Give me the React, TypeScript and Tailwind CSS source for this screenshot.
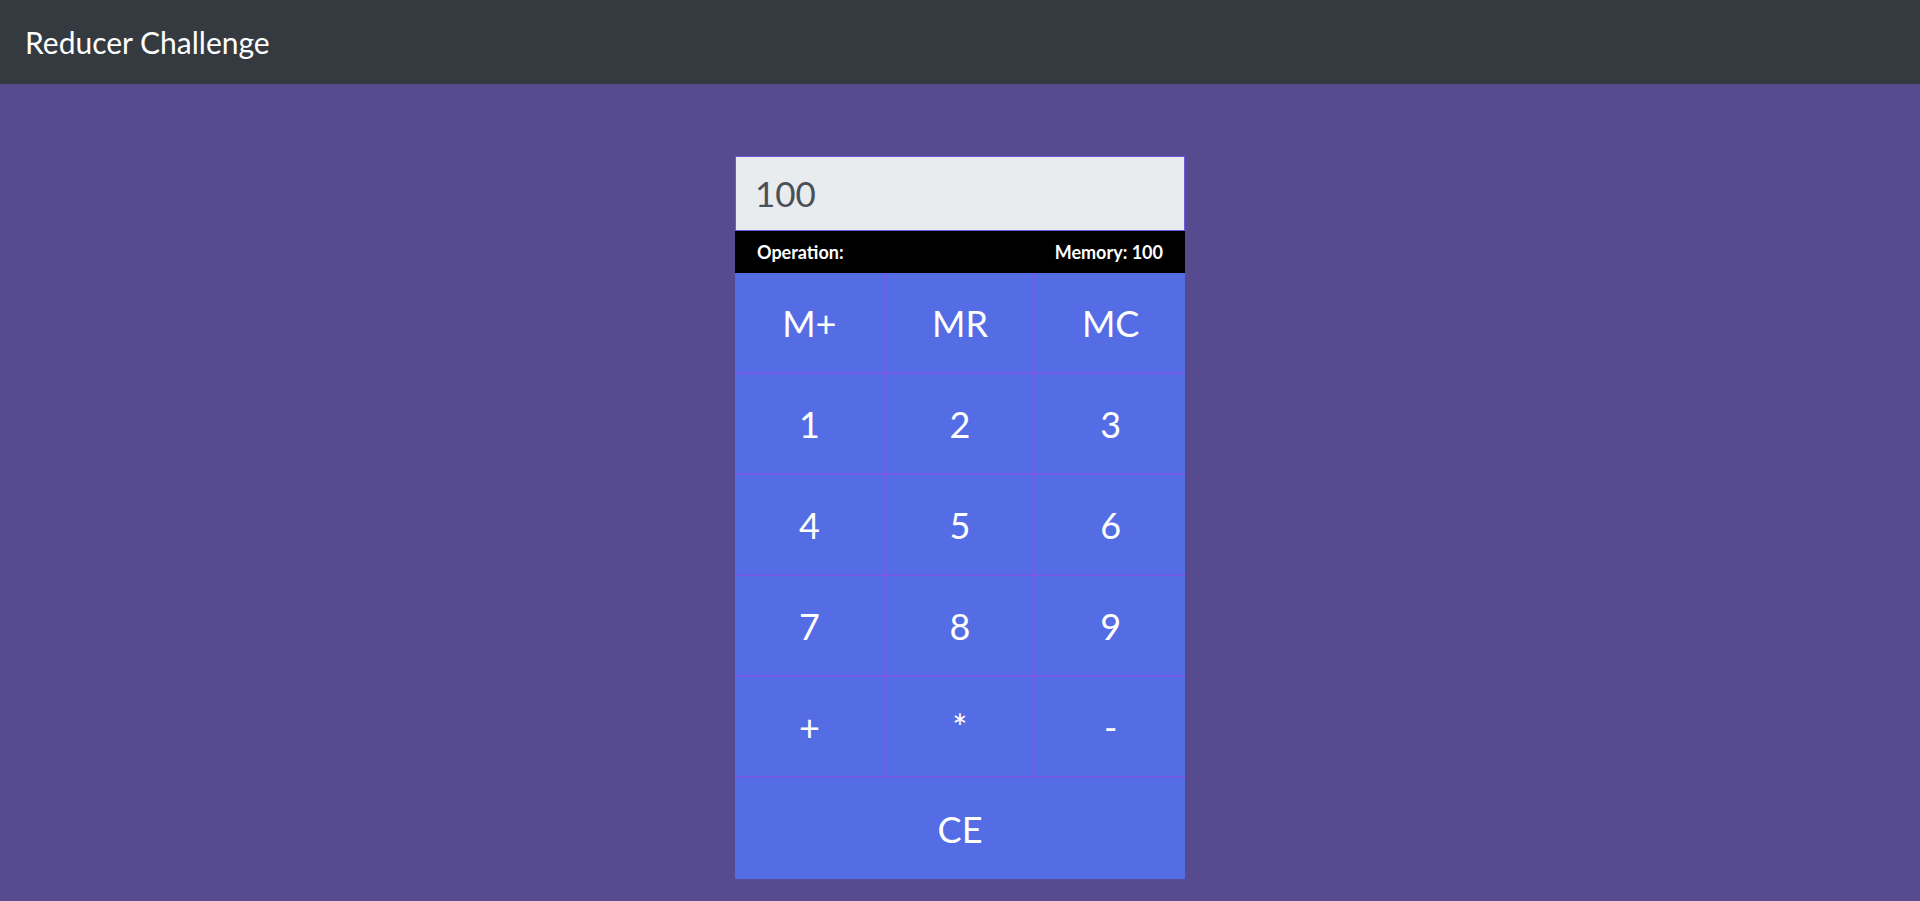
const keys = ["M+", "MR", "MC", "1", "2", "3", "4", "5", "6", "7", "8", "9", "+", "*", "-"];

export default function App() {
  return (
    <div className="min-h-[901px] bg-[#574b90] font-['Lato','Liberation_Sans',sans-serif]">
      <nav className="flex h-[84px] items-center bg-[#343a40] px-[25px]">
        <span className="text-[30px] leading-none text-white">Reducer Challenge</span>
      </nav>
      <div className="mx-auto mt-[72px] w-[450px]">
        <div className="flex h-[75px] items-center border border-[#7158e2] bg-[#e9ecef] pl-[19px] text-[35px] text-[#495057]">
          100
        </div>
        <div className="flex h-[42px] items-center justify-between bg-black px-[22px] text-[18px] font-bold text-white">
          <span>Operation:</span>
          <span>Memory: 100</span>
        </div>
        <div className="grid grid-cols-3 gap-[2px] bg-[#7458e6]">
          {keys.map((k) => (
            <button
              key={k}
              className="flex h-[99px] items-center justify-center bg-[#546de5] text-[36px] text-white"
            >
              {k}
            </button>
          ))}
          <button className="col-span-3 flex h-[101px] items-center justify-center bg-[#546de5] text-[36px] text-white">
            CE
          </button>
        </div>
      </div>
    </div>
  );
}
